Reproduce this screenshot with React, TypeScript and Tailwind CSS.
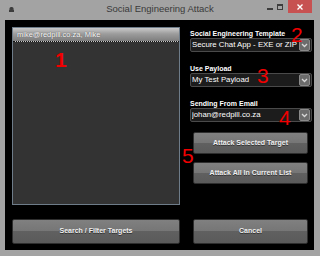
import React from 'react';

const ui = { fontFamily: '"Liberation Sans", Arial, sans-serif' };

const Chevron = () => (
  <svg width="7" height="5" viewBox="0 0 7 5" fill="none">
    <path d="M1 1L3.5 3.5L6 1" stroke="#d8d8d8" strokeWidth="1.3" />
  </svg>
);

const Dropdown: React.FC<{ value: string }> = ({ value }) => (
  <div className="flex h-[14px] items-center rounded-[2px] border border-[#4a4a4a] bg-[#1c1c1c] pl-[1px] pr-[1px]">
    <span className="flex-1 overflow-hidden whitespace-nowrap text-[7.8px] leading-none text-white">{value}</span>
    <div className="flex h-[12px] w-[11px] shrink-0 items-center justify-center rounded-[2px] border border-[#8a8a8a] bg-[#6c6c6c]">
      <Chevron />
    </div>
  </div>
);

const Button: React.FC<{ label: string; className?: string }> = ({ label, className }) => (
  <div
    className={`flex items-center justify-center rounded-[2px] border border-[#2e2e2e] bg-[linear-gradient(to_bottom,#808080_0%,#767676_48%,#606060_50%,#5a5a5a_100%)] text-[7px] font-bold text-[#f0f0f0] [text-shadow:0_1px_0_#333] ${className ?? ''}`}
  >
    {label}
  </div>
);

const Label: React.FC<{ text: string; className?: string }> = ({ text, className }) => (
  <div className={`flex h-[10px] items-center text-[7px] font-bold leading-none text-white ${className ?? ''}`}>{text}</div>
);

const Num: React.FC<{ n: string; className: string }> = ({ n, className }) => (
  <span className={`absolute text-[21px] leading-none text-[#f00000] ${className}`}>{n}</span>
);

export default function App() {
  return (
    <div className="relative flex h-[256px] w-[320px] flex-col overflow-hidden bg-[#a3a3a3]" style={ui}>
      {/* title bar */}
      <div className="relative flex h-[20px] items-center">
        <svg className="absolute left-[9px] top-[7px]" width="5" height="5" viewBox="0 0 5 5">
          <rect x="0.5" y="0" width="4" height="3" rx="1.5" fill="#3c3c3c" />
          <rect x="0" y="2.5" width="5" height="2.5" fill="#3c3c3c" />
        </svg>
        <div className="flex-1 pb-[1px] text-center text-[9.5px] text-[#3a3a3a]">Social Engineering Attack</div>
        <div className="absolute left-[267px] top-[8px] h-[1.5px] w-[6px] bg-[#3c3c3c]" />
        <div className="absolute left-[277px] top-[4px] h-[6px] w-[6px] border border-t-2 border-[#3c3c3c]" />
        <div className="absolute left-[288px] top-0 flex h-[13px] w-[24px] items-center justify-center bg-[#c75050]">
          <svg width="6" height="6" viewBox="0 0 6 6">
            <path d="M0.5 0.5L5.5 5.5M5.5 0.5L0.5 5.5" stroke="#fff" strokeWidth="1.4" />
          </svg>
        </div>
      </div>

      {/* client area */}
      <div className="ml-[5px] mr-[6px] flex h-[230px] bg-black">
        <div className="ml-[7px] flex w-[168px] flex-col">
          <div className="mt-[7px] flex h-[178px] flex-col border border-[#6e7b89] bg-[#333333]">
            <div className="flex h-[14px] items-center border-b border-dotted border-[#111] bg-[linear-gradient(to_bottom,#cacaca_0%,#9c9c9c_45%,#7e7e7e_100%)] pl-[4px] text-[7.5px] text-white [text-shadow:0_0_1px_#333]">
              mike@redpill.co.za, Mike
            </div>
          </div>
          <Button label="Search / Filter Targets" className="mt-[14px] h-[25px]" />
        </div>

        <div className="ml-[10px] flex w-[122px] flex-col">
          <Label text="Social Engineering Template" className="mt-[8px]" />
          <Dropdown value="Secure Chat App - EXE or ZIP" />
          <Label text="Use Payload" className="mt-[11px]" />
          <Dropdown value="My Test Payload" />
          <Label text="Sending From Email" className="mt-[11px]" />
          <Dropdown value="johan@redpill.co.za" />
          <Button label="Attack Selected Target" className="ml-[3px] mt-[10px] h-[22px] w-[115px]" />
          <Button label="Attack All In Current List" className="ml-[3px] mt-[8px] h-[22px] w-[115px]" />
          <Button label="Cancel" className="ml-[3px] mt-[35px] h-[25px] w-[115px]" />
        </div>
      </div>

      <Num n="1" className="left-[55px] top-[49px] font-bold" />
      <Num n="2" className="left-[291px] top-[24px]" />
      <Num n="3" className="left-[257px] top-[65px]" />
      <Num n="4" className="left-[279px] top-[107px]" />
      <Num n="5" className="left-[182px] top-[145px]" />
    </div>
  );
}
